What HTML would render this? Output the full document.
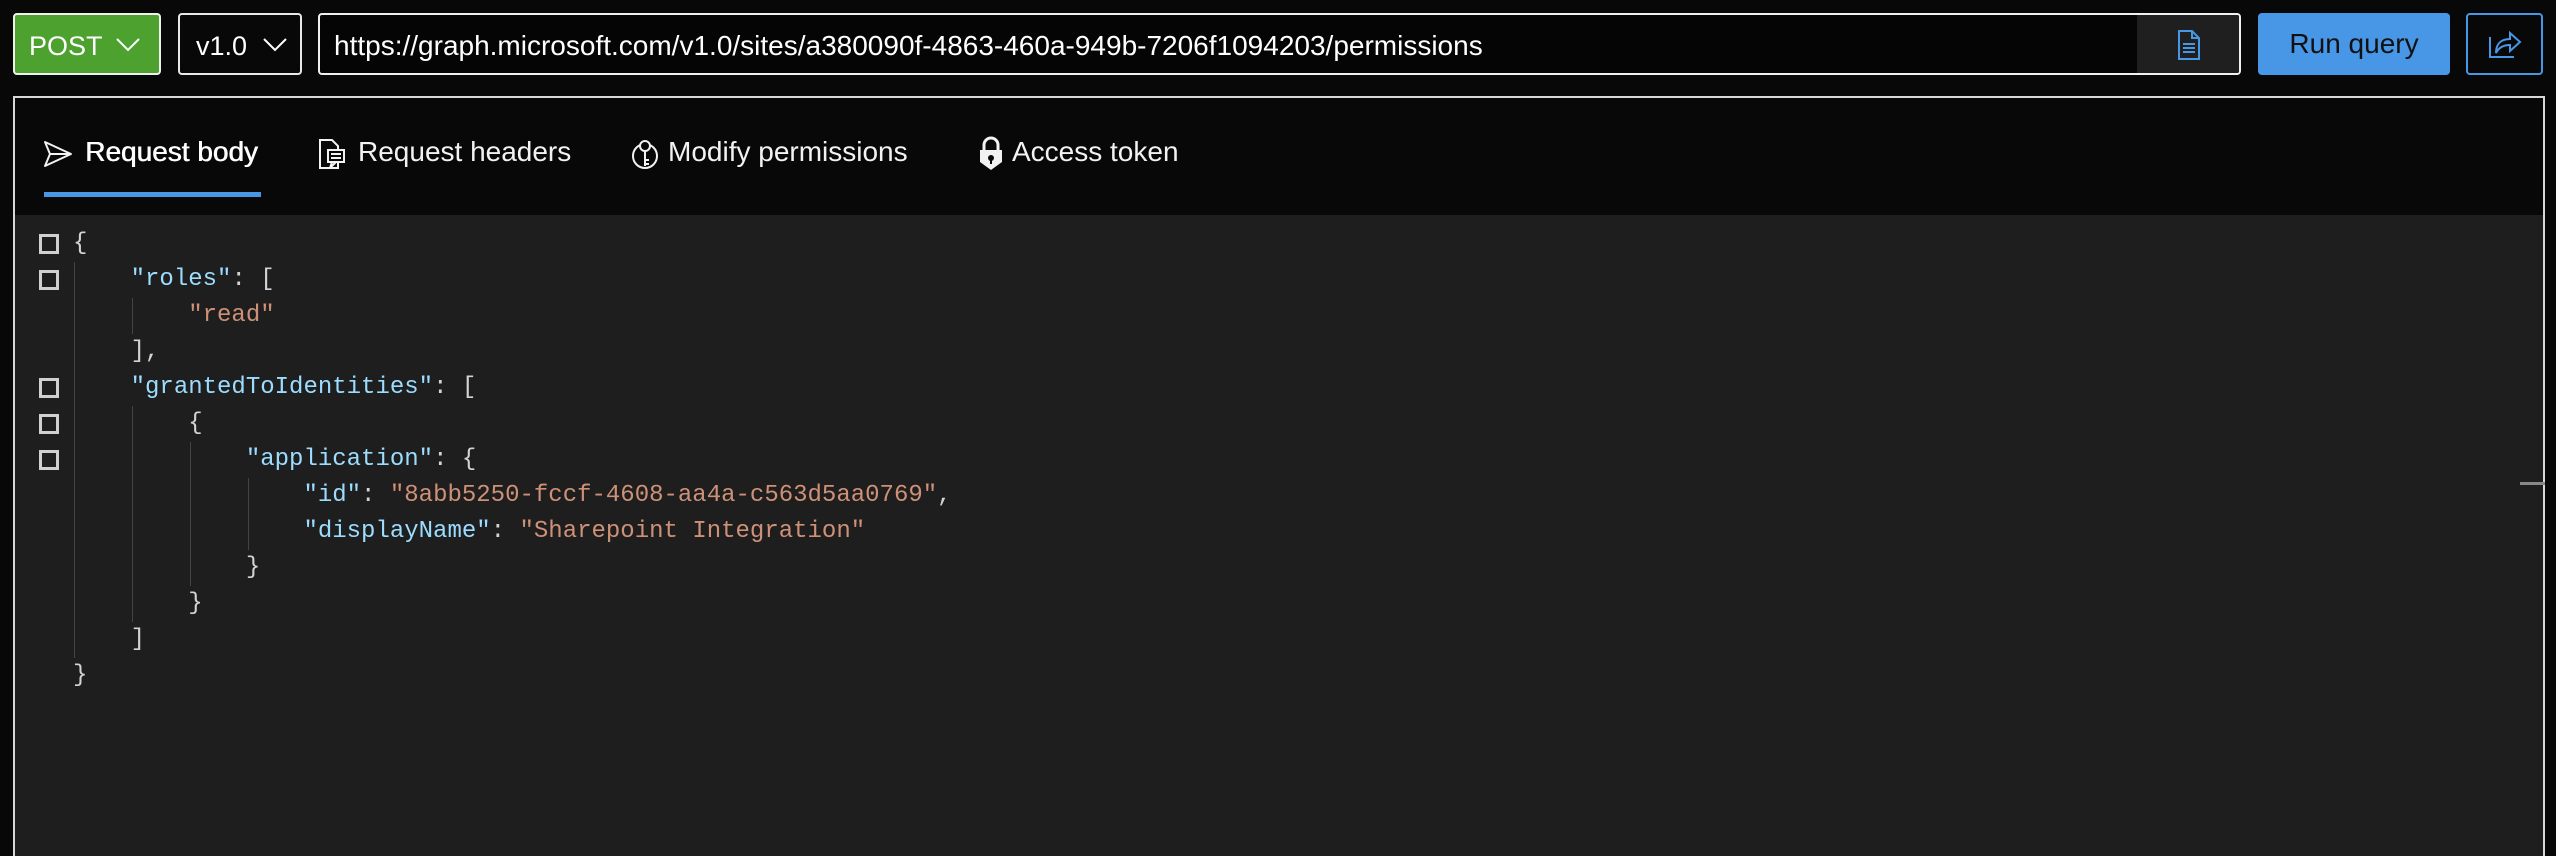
<!DOCTYPE html>
<html><head><meta charset="utf-8"><style>
*{margin:0;padding:0;box-sizing:border-box}
body{width:2556px;height:852px;background:#080808;position:relative;overflow:hidden;font-family:"Liberation Sans",sans-serif;color:#fff}
.abs{position:absolute}
.btn{position:absolute;top:13px;height:62px;border-radius:4px}
.post{left:13px;width:148px;background:#4ca12f;border:2px solid #f0f0f0}
.ver{left:178px;width:124px;border:2px solid #e8e8e8}
.url{left:318px;width:1923px;border:2px solid #f0f0f0;background:#050505;overflow:hidden}
.run{left:2258px;width:192px;background:#4896e6;color:#111;font-size:28px;line-height:62px;text-align:center}
.share{left:2466px;width:77px;border:2px solid #4896e6}
.lbl{position:absolute;font-size:27px;top:16px}
.panel{position:absolute;left:13px;top:96px;width:2532px;height:760px;border:2px solid #d8d8d8;border-bottom:none;background:#1e1e1e}
.tabs{position:absolute;left:0;top:0;right:0;height:117px;background:#080808}
.tab{position:absolute;top:38px;font-size:28px;color:#f2f2f2}
.code{position:absolute;left:0;top:117px;right:0;bottom:0;background:#1e1e1e;font-family:"Liberation Mono",monospace;font-size:24px;color:#d4d4d4}
.ln{position:absolute;height:36px;line-height:36px;white-space:pre}
.k{color:#9cdcfe}.s{color:#ce9178}
.cb{position:absolute;left:24px;width:20px;height:20px;border:3px solid #d0d0d0}
.g{position:absolute;width:1px;background:#444}
.inner{position:absolute;left:0;top:5px;right:0;bottom:0}
</style></head><body>
<div class="btn post"><span class="lbl" style="left:14px;color:#fff">POST</span>
<svg class="abs" style="left:100px;top:22px" width="26" height="16" viewBox="0 0 26 16"><path d="M2 2 L13 13 L24 2" stroke="#fff" stroke-width="2" fill="none"/></svg></div>
<div class="btn ver"><span class="lbl" style="left:16px">v1.0</span>
<svg class="abs" style="left:82px;top:22px" width="26" height="16" viewBox="0 0 26 16"><path d="M2 2 L13 13 L24 2" stroke="#fff" stroke-width="2" fill="none"/></svg></div>
<div class="btn url"><span class="lbl" style="left:14px;font-size:28px;top:15px">https://graph.microsoft.com/v1.0/sites/a380090f-4863-460a-949b-7206f1094203/permissions</span>
<div class="abs" style="left:1817px;top:0;width:104px;height:60px;background:#1f1f1f">
<svg class="abs" style="left:40px;top:14px" width="24" height="32" viewBox="0 0 24 32"><path d="M2 2 H15 L22 9 V30 H2 Z M15 2 V9 H22" stroke="#4896e6" stroke-width="2" fill="none"/><path d="M6 15H18M6 19H18M6 23H18" stroke="#4896e6" stroke-width="2"/></svg></div></div>
<div class="btn run">Run query</div>
<div class="btn share"><svg class="abs" style="left:20px;top:14px" width="34" height="30" viewBox="0 0 34 30"><path d="M2 8 V28 H26" stroke="#4896e6" stroke-width="2" fill="none"/><path d="M8 24 C8 14 14 10 22 10 V4 L32 13 L22 22 V16 C16 16 11 18 8 24 Z" stroke="#4896e6" stroke-width="2" fill="none"/></svg></div>

<div class="panel">
<div class="tabs">
<svg class="abs" style="left:28px;top:42px" width="30" height="28" viewBox="0 0 30 28"><path d="M2 2 L28 14 L2 26 L7 14 Z M7 14 H28" stroke="#f2f2f2" stroke-width="2" fill="none" stroke-linejoin="round"/></svg>
<span class="tab" style="left:70px;color:#fff;text-shadow:0.6px 0 0 #fff">Request body</span>
<svg class="abs" style="left:303px;top:40px" width="30" height="34" viewBox="0 0 30 34"><path d="M2 2 H14 L20 8 V30 H2 Z" stroke="#f2f2f2" stroke-width="2" fill="none"/><rect x="10" y="12" width="16" height="12" stroke="#f2f2f2" stroke-width="2" fill="#080808"/><path d="M13 16H23M13 20H23M14 24 L12 30 L18 24" stroke="#f2f2f2" stroke-width="2" fill="none"/></svg>
<span class="tab" style="left:343px">Request headers</span>
<svg class="abs" style="left:616px;top:38px" width="28" height="36" viewBox="0 0 28 36"><circle cx="14" cy="20" r="12" stroke="#f2f2f2" stroke-width="2" fill="none"/><circle cx="14" cy="10" r="5" stroke="#f2f2f2" stroke-width="2" fill="#080808"/><path d="M14 15 V30 M14 24 H18 M14 28 H18" stroke="#f2f2f2" stroke-width="2"/></svg>
<span class="tab" style="left:653px">Modify permissions</span>
<svg class="abs" style="left:963px;top:38px" width="26" height="36" viewBox="0 0 26 36"><path d="M6 14 V9 A7 7 0 0 1 20 9 V14" stroke="#f2f2f2" stroke-width="3" fill="none"/><path d="M2 14 H24 V26 L13 34 L2 26 Z" fill="#f2f2f2"/><circle cx="13" cy="22" r="3" fill="#080808"/><path d="M13 22 V28" stroke="#080808" stroke-width="2"/></svg>
<span class="tab" style="left:997px">Access token</span>
<div class="abs" style="left:29px;top:94px;width:217px;height:5px;background:#4896e6"></div>
</div>
<div class="code"><div class="inner">
<div class="cb" style="top:14px"></div><div class="cb" style="top:50px"></div><div class="cb" style="top:158px"></div><div class="cb" style="top:194px"></div><div class="cb" style="top:230px"></div>
<div class="g" style="left:59px;top:42px;height:396px"></div>
<div class="g" style="left:117px;top:78px;height:36px"></div>
<div class="g" style="left:117px;top:186px;height:216px"></div>
<div class="g" style="left:175px;top:222px;height:144px"></div>
<div class="g" style="left:233px;top:258px;height:72px"></div>
<div class="ln" style="left:58px;top:6px">{</div>
<div class="ln" style="left:58px;top:42px">    <span class="k">"roles"</span>: [</div>
<div class="ln" style="left:58px;top:78px">        <span class="s">"read"</span></div>
<div class="ln" style="left:58px;top:114px">    ],</div>
<div class="ln" style="left:58px;top:150px">    <span class="k">"grantedToIdentities"</span>: [</div>
<div class="ln" style="left:58px;top:186px">        {</div>
<div class="ln" style="left:58px;top:222px">            <span class="k">"application"</span>: {</div>
<div class="ln" style="left:58px;top:258px">                <span class="k">"id"</span>: <span class="s">"8abb5250-fccf-4608-aa4a-c563d5aa0769"</span>,</div>
<div class="ln" style="left:58px;top:294px">                <span class="k">"displayName"</span>: <span class="s">"Sharepoint Integration"</span></div>
<div class="ln" style="left:58px;top:330px">            }</div>
<div class="ln" style="left:58px;top:366px">        }</div>
<div class="ln" style="left:58px;top:402px">    ]</div>
<div class="ln" style="left:58px;top:438px">}</div>
</div>
<div class="abs" style="left:2505px;top:267px;width:25px;height:3px;background:#888"></div>
</div>
</div>
</body></html>
